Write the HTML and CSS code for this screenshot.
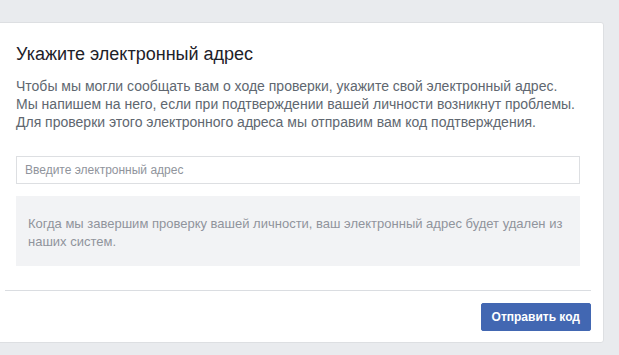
FILE: index.html
```html
<!DOCTYPE html>
<html>
<head>
<title>Укажите электронный адрес</title>
<link rel="stylesheet" href="styles.css">
</head>
<body>
  <div class="card">
    <div class="card-body">
      <h2 class="title">Укажите электронный адрес</h2>
      <p class="intro">Чтобы мы могли сообщать вам о ходе проверки, укажите свой электронный адрес.<br>
      Мы напишем на него, если при подтверждении вашей личности возникнут проблемы.<br>
      Для проверки этого электронного адреса мы отправим вам код подтверждения.</p>
      <input type="text" class="email" placeholder="Введите электронный адрес">
      <div class="notice">Когда мы завершим проверку вашей личности, ваш электронный адрес будет удален из наших систем.</div>
    </div>
    <div class="card-footer">
      <button type="button" class="btn-send">Отправить код</button>
    </div>
  </div>
</body>
</html>
```

FILE: styles.css
```css
body {
  margin: 0;
  padding-top: 22px;
  background-color: #e9ebee;
  font-family: "Liberation Sans", Arial, sans-serif;
  color: #1d2129;
}
.card {
  box-sizing: border-box;
  width: 612px;
  margin-left: -8px;
  background-color: #fff;
  border: 1px solid #dddfe2;
  border-radius: 3px;
}
.card-body {
  padding: 21px 23px 24px;
}
.title {
  margin: 0;
  font-size: 18px;
  line-height: 20px;
  font-weight: normal;
  color: #1d2129;
}
.intro {
  margin: 13px 0 0;
  font-size: 14px;
  line-height: 18px;
  color: #606770;
}
.email {
  display: block;
  box-sizing: border-box;
  width: 100%;
  height: 28px;
  margin-top: 25px;
  padding: 0 8px;
  border: 1px solid #dddfe2;
  font-family: inherit;
  font-size: 12px;
  color: #1d2129;
  outline: none;
}
.email::placeholder {
  color: #90949c;
}
.notice {
  margin-top: 12px;
  padding: 19px 12px 15px;
  background-color: #f2f3f5;
  font-size: 13px;
  line-height: 18px;
  color: #90949c;
}
.card-footer {
  margin: 0 12px;
  padding: 12px 0 11px;
  border-top: 1px solid #dadde1;
  display: flex;
  justify-content: flex-end;
}
.btn-send {
  height: 28px;
  padding: 0 10px;
  background-color: #4267b2;
  border: 1px solid #4267b2;
  border-radius: 2px;
  color: #fff;
  font-family: inherit;
  font-size: 12px;
  font-weight: bold;
  cursor: pointer;
}
```
